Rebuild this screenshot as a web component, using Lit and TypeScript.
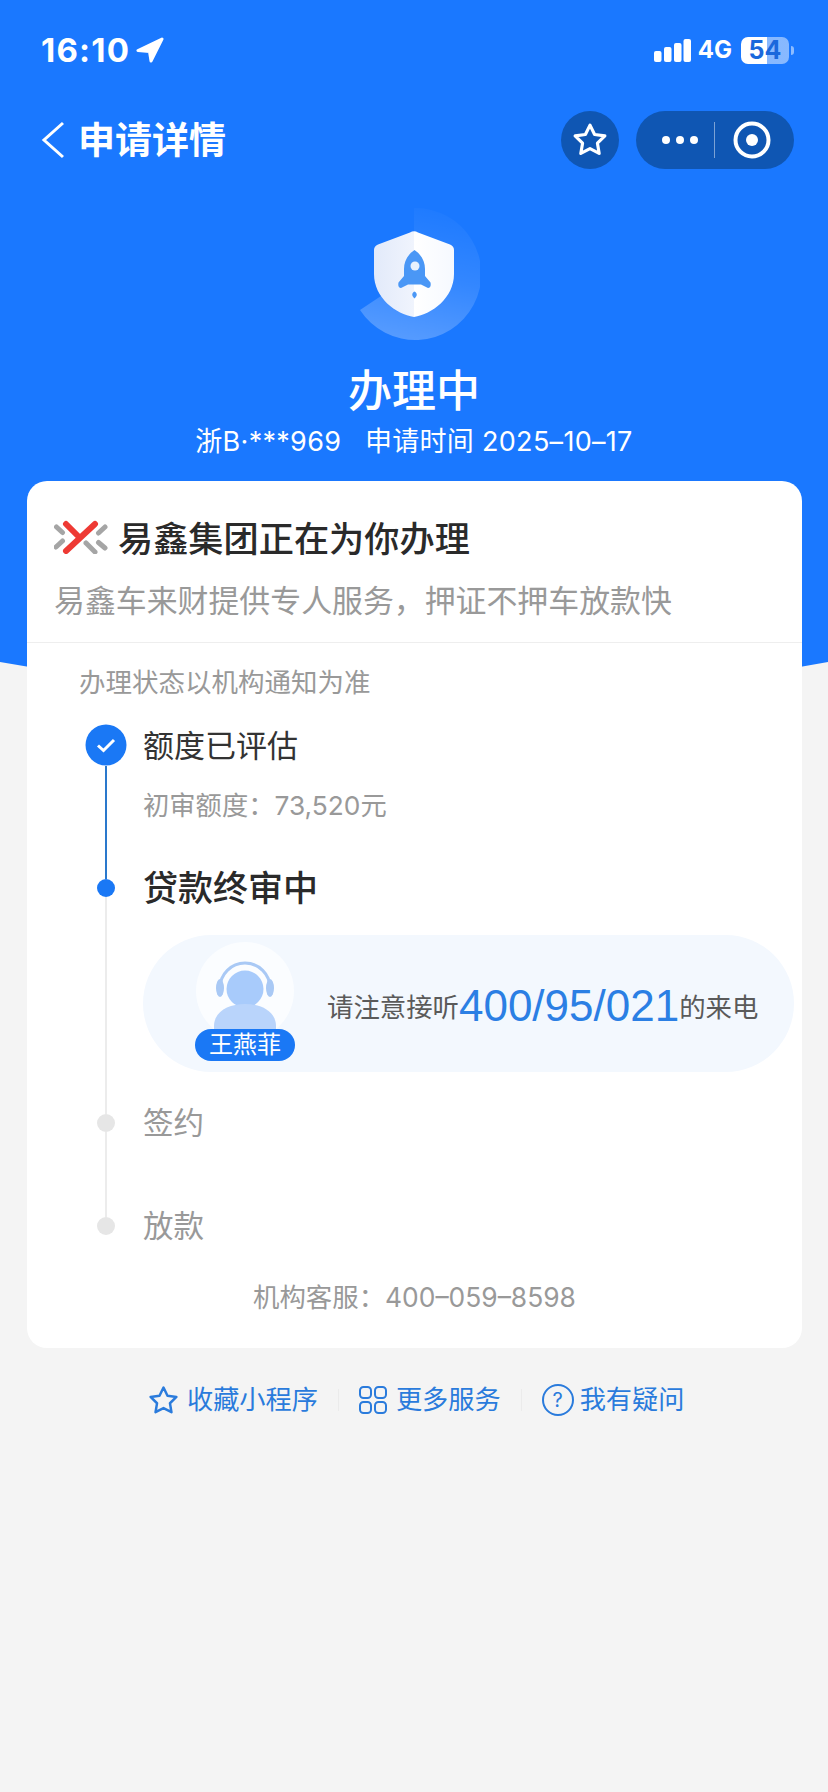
import { LitElement, html, css, svg } from "lit";
import { customElement } from "lit/decorators.js";

const starPath = "M12 2.6l2.9 5.9 6.5.9-4.7 4.6 1.1 6.5L12 17.5l-5.8 3 1.1-6.5-4.7-4.6 6.5-.9z";

@customElement("app-root")
export class AppRoot extends LitElement {
  static styles = css`
    :host {
      display: block;
      position: relative;
      width: 828px;
      min-height: 1792px;
      overflow: hidden;
      background: #f4f4f4;
      font-family: Inter, "Noto Sans CJK SC", sans-serif;
      color: #333;
    }
    .bg {
      position: absolute;
      left: 0;
      top: 0;
    }
    .page {
      position: relative;
      display: flex;
      flex-direction: column;
    }

    /* status bar */
    .status {
      height: 100px;
      display: flex;
      align-items: center;
      justify-content: space-between;
      padding: 0 34px 0 41px;
      color: #fff;
      font-weight: 700;
    }
    .status-left,
    .status-right {
      display: flex;
      align-items: center;
    }
    .time {
      font-size: 33px;
      letter-spacing: 1.2px;
      line-height: 40px;
    }
    .arrow {
      margin-left: 6px;
    }
    .net {
      font-size: 24px;
      margin: 0 9px 0 7px;
      line-height: 30px;
    }
    .battery {
      position: relative;
      width: 48px;
      height: 27px;
      border-radius: 7px;
      background: linear-gradient(90deg, #fff 0 26px, rgba(255, 255, 255, 0.48) 26px);
      color: #1a68dc;
      font-size: 25px;
      line-height: 27px;
      text-align: center;
      margin-right: 5px;
    }
    .battery::after {
      content: "";
      position: absolute;
      right: -5px;
      top: 9px;
      width: 3px;
      height: 9px;
      border-radius: 0 4px 4px 0;
      background: rgba(255, 255, 255, 0.5);
    }

    /* nav */
    .nav {
      height: 58px;
      margin-top: 11px;
      display: flex;
      align-items: center;
      padding: 0 34px 0 41px;
      color: #fff;
    }
    .nav h1 {
      margin: 2px 0 0 13px;
      font-size: 37px;
      line-height: 56px;
      font-weight: 700;
      flex: 1;
    }
    .round {
      width: 58px;
      height: 58px;
      border-radius: 50%;
      background: #0f56b3;
      display: flex;
      align-items: center;
      justify-content: center;
      margin-right: 17px;
    }
    .capsule {
      width: 158px;
      height: 58px;
      border-radius: 29px;
      background: #0f56b3;
      display: flex;
      align-items: center;
      box-sizing: border-box;
      padding-left: 26px;
    }
    .dots {
      display: flex;
      gap: 6px;
    }
    .dots i {
      width: 8px;
      height: 8px;
      border-radius: 50%;
      background: #fff;
    }
    .sep {
      width: 1px;
      height: 36px;
      background: rgba(255, 255, 255, 0.45);
      margin: 0 18px 0 16px;
    }

    /* hero */
    .hero {
      display: flex;
      flex-direction: column;
      align-items: center;
      color: #fff;
      margin-top: 39px;
    }
    .hero h2 {
      margin: 23px 0 0;
      font-size: 44px;
      line-height: 56px;
      font-weight: 500;
    }
    .hero p {
      margin: 5px 0 0;
      font-size: 27px;
      letter-spacing: 0.3px;
      line-height: 36px;
      white-space: pre;
    }

    /* card */
    .card {
      margin: 21px 26px 0 27px;
      background: #fff;
      border-radius: 20px;
      padding-bottom: 33px;
    }
    .card-head {
      padding: 34px 27px 19px;
      border-bottom: 1px solid #eeeeee;
    }
    .brand {
      display: flex;
      align-items: center;
      gap: 10px;
      font-size: 35.2px;
      line-height: 48px;
      font-weight: 500;
      color: #2a2a2a;
    }
    .brand svg {
      margin-top: -4px;
    }
    .card-head p {
      margin: 16px 0 0;
      font-size: 30.9px;
      line-height: 44px;
      color: #999;
      white-space: nowrap;
    }
    .note {
      margin: 21px 0 0 52px;
      font-size: 26.5px;
      line-height: 36px;
      color: #999;
    }
    .timeline {
      margin: 24px 8px 0 58px;
    }
    .step {
      display: flex;
    }
    .rail {
      width: 42px;
      flex: none;
      display: flex;
      flex-direction: column;
      align-items: center;
      margin-right: 16px;
    }
    .bar {
      width: 2px;
      background: #ececec;
    }
    .bar.fill {
      flex: 1;
    }
    .bar.on {
      background: #2a78cc;
    }
    .bar.stub {
      height: 12px;
    }
    .dot {
      width: 18px;
      height: 18px;
      flex: none;
      border-radius: 50%;
      background: #e6e6e6;
    }
    .dot.on {
      background: #1a78f5;
    }
    .tick {
      width: 42px;
      height: 42px;
      flex: none;
      display: block;
    }
    .body {
      flex: 1;
      min-width: 0;
    }
    .first {
      height: 143px;
    }
    .label {
      font-size: 31px;
      line-height: 44px;
      color: #333;
    }
    .label.active {
      font-size: 35px;
      line-height: 42px;
      font-weight: 500;
      color: #2a2a2a;
    }
    .label.todo {
      font-size: 30.5px;
      line-height: 42px;
      color: #999;
    }
    .sub {
      margin-top: 20px;
      font-size: 26.3px;
      line-height: 36px;
      color: #999;
    }
    .pill {
      margin: 26px 0 30px;
      height: 137px;
      border-radius: 69px;
      background: #f3f8fe;
      display: flex;
      align-items: center;
      padding-left: 52px;
      white-space: nowrap;
    }
    .avatar {
      position: relative;
      width: 100px;
      height: 119px;
      margin-top: -4px;
      flex: none;
    }
    .avatar svg {
      display: block;
    }
    .badge {
      position: absolute;
      left: 0;
      bottom: 0;
      width: 100px;
      height: 32px;
      border-radius: 16px;
      background: #1a78f5;
      color: #fff;
      font-size: 24px;
      line-height: 32px;
      text-align: center;
    }
    .call {
      margin: 4px 0 0 32px;
      display: flex;
      align-items: center;
      font-size: 26.4px;
      color: #5a5a5a;
    }
    .call b {
      font-family: "Liberation Sans", sans-serif;
      font-size: 44px;
      font-weight: 400;
      color: #2b7fe4;
      line-height: 50px;
    }
    .plain {
      height: 103px;
    }
    .last {
      height: 40px;
    }
    .service {
      margin-top: 34px;
      text-align: center;
      font-size: 26.4px;
      line-height: 36px;
      color: #999;
    }

    /* links */
    .links {
      margin: 34px 0 0 147px;
      display: flex;
      align-items: center;
      color: #2a7bdc;
      font-size: 26.2px;
      line-height: 36px;
    }
    .link {
      display: flex;
      align-items: center;
    }
    .gap {
      width: 1px;
      height: 22px;
      background: #ebebeb;
      margin: 0 20px;
    }
    .q {
      width: 32px;
      height: 32px;
      box-sizing: border-box;
      border: 2px solid #2a7bdc;
      border-radius: 50%;
      font-size: 20px;
      line-height: 28px;
      text-align: center;
      margin-right: 6px;
    }
  `;

  private backIcon() {
    return html`<svg width="24" height="38" viewBox="0 0 24 38">
      <path d="M22 2 3 19l19 17" fill="none" stroke="#fff" stroke-width="3" />
    </svg>`;
  }

  private shield() {
    return html`<svg width="132" height="132" viewBox="0 0 132 132">
      <defs>
        <linearGradient id="arc" x1="0.6" y1="0" x2="0.4" y2="1">
          <stop offset="0" stop-color="#fff" stop-opacity="0.02" />
          <stop offset="0.5" stop-color="#fff" stop-opacity="0.11" />
          <stop offset="1" stop-color="#fff" stop-opacity="0.26" />
        </linearGradient>
        <linearGradient id="sh" x1="0" y1="0" x2="1" y2="0">
          <stop offset="0" stop-color="#e2eafa" />
          <stop offset="0.5" stop-color="#f0f4fd" />
          <stop offset="0.5" stop-color="#ffffff" />
          <stop offset="1" stop-color="#f6f9ff" />
        </linearGradient>
      </defs>
      <path d="M66 0A66 66 0 1 1 12 102L66 66Z" fill="url(#arc)" />
      <path
        d="M62 24.500Q66 22 70 24.500L102 36.500Q106 38 106 42V66C106 90 84 106 66 109C48 106 26 90 26 66V42Q26 38 30 36.500Z"
        fill="url(#sh)"
      />
      <path
        d="M66.500 42C59 47 56 54 56 61V68L50.500 74.500Q49.500 79.500 53 80L60 76.500H73L80 80Q83.500 79.500 82.500 74.500L77 68V61C77 54 74 47 66.500 42Z"
        fill="#4a97f6"
      />
      <circle cx="67" cy="58" r="4.500" fill="#e8f1fd" />
      <path d="M66.500 83.500C69 85 70 87 66.500 90.500C63 87 64 85 66.500 83.500Z" fill="#4a97f6" />
    </svg>`;
  }

  private logo() {
    const grey = [
      [2.5, 7, 8.5, 12.5],
      [2, 27, 8.5, 21],
      [44.5, 13, 51, 7],
      [44.5, 22.5, 51, 28],
      [32, 23, 41, 32],
    ];
    return html`<svg width="54" height="34" viewBox="0 0 54 34">
      ${grey.map(
        ([a, b, c, d]) =>
          svg`<line x1=${a} y1=${b} x2=${c} y2=${d} stroke="#a5a5a5" stroke-width="5" stroke-linecap="round" />`
      )}
      <path d="M12 4 25 17M41 4 12 31" fill="none" stroke="#ee3a34" stroke-width="6" stroke-linecap="round" />
    </svg>`;
  }

  private agent() {
    return html`<svg width="100" height="100" viewBox="0 0 100 100">
      <circle cx="50" cy="49" r="49" fill="#fbfdff" />
      <path d="M25 46A25 25 0 0 1 75 46" fill="none" stroke="#a9c9f5" stroke-width="3" />
      <ellipse cx="25" cy="46" rx="4" ry="9" fill="#a9c9f5" />
      <ellipse cx="75" cy="46" rx="4" ry="9" fill="#a9c9f5" />
      <circle cx="50" cy="47" r="18.500" fill="#a8cbfb" />
      <path d="M19 92V84C19 70 33 62 50 62S81 70 81 84V92Z" fill="#b9d4fb" />
    </svg>`;
  }

  render() {
    return html`
      <svg class="bg" width="828" height="700" viewBox="0 0 828 700">
        <path d="M0 0H828V662Q414 738 0 662Z" fill="#1a78ff" />
      </svg>
      <div class="page">
        <div class="status">
          <div class="status-left">
            <span class="time">16:10</span>
            <svg class="arrow" width="28" height="26" viewBox="0 0 28 26">
              <path d="M26 2 2 13.500 13.500 14.500 15 24Z" fill="#fff" stroke="#fff" stroke-width="3" stroke-linejoin="round" />
            </svg>
          </div>
          <div class="status-right">
            <svg width="37" height="23" viewBox="0 0 37 23">
              <rect x="0" y="12" width="7.500" height="11" rx="2" fill="#fff" />
              <rect x="10" y="8" width="7.500" height="15" rx="2" fill="#fff" />
              <rect x="20" y="4" width="7.500" height="19" rx="2" fill="#fff" />
              <rect x="29.500" y="0" width="7.500" height="23" rx="2" fill="#fff" />
            </svg>
            <span class="net">4G</span>
            <span class="battery">54</span>
          </div>
        </div>

        <div class="nav">
          ${this.backIcon()}
          <h1>申请详情</h1>
          <div class="round">
            <svg width="38" height="38" viewBox="0 0 24 24">
              <path d=${starPath} fill="none" stroke="#fff" stroke-width="2" stroke-linejoin="round" />
            </svg>
          </div>
          <div class="capsule">
            <div class="dots"><i></i><i></i><i></i></div>
            <div class="sep"></div>
            <svg width="38" height="38" viewBox="0 0 38 38">
              <circle cx="19" cy="19" r="16.500" fill="none" stroke="#fff" stroke-width="4" />
              <circle cx="19" cy="19" r="6" fill="#fff" />
            </svg>
          </div>
        </div>

        <div class="hero">
          ${this.shield()}
          <h2>办理中</h2>
          <p>浙B·***969   申请时间 2025–10–17</p>
        </div>

        <div class="card">
          <div class="card-head">
            <div class="brand">${this.logo()}<span>易鑫集团正在为你办理</span></div>
            <p>易鑫车来财提供专人服务，押证不押车放款快</p>
          </div>
          <div class="note">办理状态以机构通知为准</div>

          <div class="timeline">
            <div class="step first">
              <div class="rail">
                <svg class="tick" viewBox="0 0 42 42">
                  <circle cx="21" cy="21" r="20.500" fill="#1a78f5" />
                  <path d="M13 21.500 18.500 26.500 29 16" fill="none" stroke="#fff" stroke-width="3" />
                </svg>
                <div class="bar on fill"></div>
              </div>
              <div class="body">
                <div class="label">额度已评估</div>
                <div class="sub">初审额度：73,520元</div>
              </div>
            </div>

            <div class="step">
              <div class="rail">
                <div class="bar on stub"></div>
                <div class="dot on"></div>
                <div class="bar fill"></div>
              </div>
              <div class="body">
                <div class="label active">贷款终审中</div>
                <div class="pill">
                  <div class="avatar">
                    ${this.agent()}
                    <div class="badge">王燕菲</div>
                  </div>
                  <div class="call">请注意接听<b>400/95/021</b>的来电</div>
                </div>
              </div>
            </div>

            <div class="step plain">
              <div class="rail">
                <div class="bar stub"></div>
                <div class="dot"></div>
                <div class="bar fill"></div>
              </div>
              <div class="body"><div class="label todo">签约</div></div>
            </div>

            <div class="step last">
              <div class="rail">
                <div class="bar stub"></div>
                <div class="dot"></div>
              </div>
              <div class="body"><div class="label todo">放款</div></div>
            </div>
          </div>

          <div class="service">机构客服：400–059–8598</div>
        </div>

        <div class="links">
          <div class="link">
            <svg width="33" height="33" viewBox="0 0 24 24" style="margin-right:7px">
              <path d=${starPath} fill="none" stroke="#2a7bdc" stroke-width="1.800" stroke-linejoin="round" />
            </svg>
            <span>收藏小程序</span>
          </div>
          <div class="gap"></div>
          <div class="link">
            <svg width="28" height="28" viewBox="0 0 28 28" style="margin-right:9px">
              <g fill="none" stroke="#2a7bdc" stroke-width="2">
                <rect x="1" y="1" width="11" height="11" rx="3.500" />
                <rect x="16" y="1" width="11" height="11" rx="3.500" />
                <rect x="1" y="16" width="11" height="11" rx="3.500" />
                <rect x="16" y="16" width="11" height="11" rx="3.500" />
              </g>
            </svg>
            <span>更多服务</span>
          </div>
          <div class="gap"></div>
          <div class="link">
            <span class="q">?</span>
            <span>我有疑问</span>
          </div>
        </div>
      </div>
    `;
  }
}
